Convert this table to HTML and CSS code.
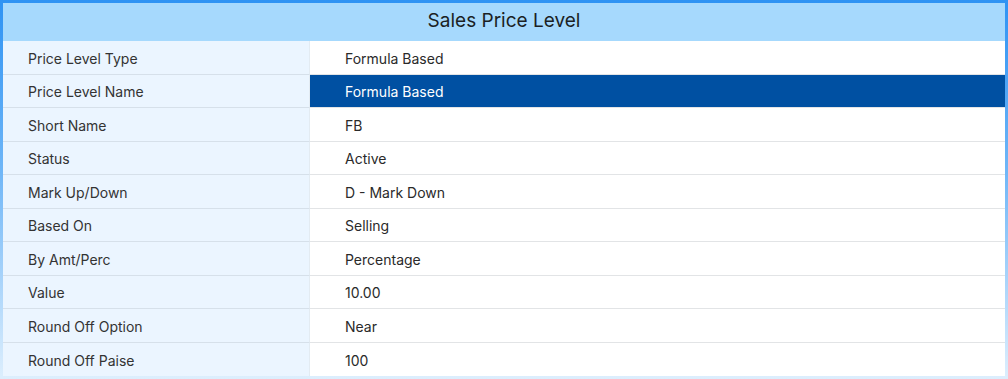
FILE: index.html
```html
<!DOCTYPE html>
<html lang="en">
	<head>
		<meta name="viewport" content="width=device-width, initial-scale=1.0" />
		<title>Sales Price Level</title>
		<link rel="stylesheet" href="styles.css">
	</head>
	<body>
		<section class="panel">
			<h1 class="panel-title">Sales Price Level</h1>
			<dl class="details">
				<dt>Price Level Type</dt>
				<dd>Formula Based</dd>

				<dt>Price Level Name</dt>
				<dd class="-selected">Formula Based</dd>

				<dt>Short Name</dt>
				<dd>FB</dd>

				<dt>Status</dt>
				<dd>Active</dd>

				<dt>Mark Up/Down</dt>
				<dd>D - Mark Down</dd>

				<dt>Based On</dt>
				<dd>Selling</dd>

				<dt>By Amt/Perc</dt>
				<dd>Percentage</dd>

				<dt>Value</dt>
				<dd>10.00</dd>

				<dt>Round Off Option</dt>
				<dd>Near</dd>

				<dt>Round Off Paise</dt>
				<dd>100</dd>
			</dl>
		</section>
	</body>
</html>
```

FILE: styles.css
```css
html,
body {
	margin: 0;
	height: 100%;
}

body {
	font-family: Inter, "Liberation Sans", sans-serif;
	color: #333;
	background-color: #fff;
}

.panel {
	box-sizing: border-box;
	display: flex;
	flex-direction: column;
	height: 379px;
	border: 3px solid transparent;
	border-image: linear-gradient(to bottom, #2f93f3 0%, #6fb6f7 45%, #dceefd 100%) 1;
	background-color: #fff;
}

.panel-title {
	flex: none;
	margin: 0;
	height: 38px;
	line-height: 35px;
	font-size: 19px;
	font-weight: 400;
	text-align: center;
	color: #1b1f24;
	background-color: #a6d9fd;
}

/* label / value pairs, ten equal rows filling the rest of the panel */
.details {
	flex: 1;
	display: grid;
	grid-template-columns: 307px 1fr;
	grid-template-rows: repeat(10, 1fr);
	margin: 0;
}

.details dt,
.details dd {
	display: flex;
	align-items: center;
	margin: 0;
	padding-top: 2px;
	font-size: 14px;
	border-bottom: 1px solid #e2e4e6;
}

.details dt {
	padding-left: 25px;
	color: #333;
	background-color: #ebf5ff;
	border-right: 1px solid #e3ebf2;
	border-bottom-color: #d6e0ea;
}

.details dd {
	padding-left: 35px;
	color: #2a2a2a;
}

.details dt:nth-last-of-type(1),
.details dd:nth-last-of-type(1) {
	border-bottom: none;
}

.details dd.-selected {
	color: #fff;
	background-color: #0050a2;
}
```
